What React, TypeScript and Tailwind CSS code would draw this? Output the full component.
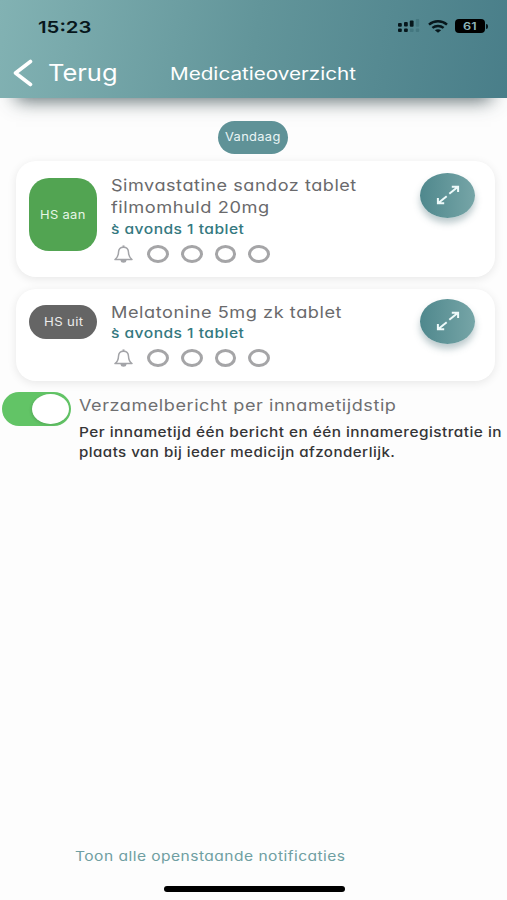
import { useLayoutEffect, useRef, useState } from "react";

/** A single line of text that is widened to fill the width of its box. */
function Line({ children, className = "" }: { children: string; className?: string }) {
  const box = useRef<HTMLDivElement>(null);
  const text = useRef<HTMLSpanElement>(null);
  const [scale, setScale] = useState(1);
  useLayoutEffect(() => {
    if (box.current && text.current) {
      setScale(box.current.clientWidth / text.current.offsetWidth);
    }
  }, [children]);
  return (
    <div ref={box} className={`shrink-0 whitespace-nowrap ${className}`}>
      <span ref={text} className="inline-block origin-left" style={{ transform: `scaleX(${scale})` }}>
        {children}
      </span>
    </div>
  );
}

function StatusIcons() {
  return (
    <div className="flex items-center">
      <svg width="22" height="14" viewBox="0 0 22 14">
        <g fill="#07171c">
          <rect x="0" y="4" width="3.8" height="3.8" rx="1" />
          <rect x="0" y="9.6" width="3.8" height="3.4" rx="1" />
          <rect x="6" y="3" width="3.8" height="4.6" rx="1" />
          <rect x="6" y="9.6" width="3.8" height="3.4" rx="1" />
          <rect x="11.8" y="1.4" width="3.8" height="6.4" rx="1" />
        </g>
        <g fill="#3d6f78" opacity=".65">
          <rect x="17.8" y="0" width="3.4" height="7.8" rx="1" />
          <rect x="11.8" y="9.6" width="3.8" height="3.4" rx="1" />
          <rect x="17.8" y="9.6" width="3.4" height="3.4" rx="1" />
        </g>
      </svg>
      <svg className="ml-2" width="20" height="13" viewBox="0 0 20 13" fill="none" stroke="#07171c" strokeWidth="2.5">
        <path d="M1 4.6C6 .2 14 .2 19 4.6" />
        <path d="M4.4 7.9c3.2-2.7 8-2.7 11.2 0" />
        <path d="M10 12.8 6.9 10.2c1.8-1.4 4.4-1.4 6.2 0Z" fill="#07171c" stroke="none" />
      </svg>
      <div className="ml-[7px] flex h-[13.5px] w-[30px] items-center justify-center rounded-[4px] bg-black">
        <Line className="w-[14px] text-[10px] leading-[13px] font-semibold text-[#8db4b9]">61</Line>
      </div>
      <div className="ml-px h-[5px] w-[2px] rounded-r-full bg-[#07171c]" />
    </div>
  );
}

function Bell() {
  return (
    <svg width="19" height="18" viewBox="0 0 19 18" fill="none" stroke="#a3a4a8" strokeWidth="1.5" strokeLinejoin="round">
      <path d="M9.5 2.2C6 2.2 4.6 4.5 4.5 7.2 4.4 11 3.6 12.6 1 14.6h17c-2.6-2-3.4-3.6-3.5-7.4-.1-2.7-1.5-5-5-5Z" />
      <path d="M9.5 2.2V.4" strokeWidth="2" />
      <path d="M7.2 15.4c.3 2.2 4.3 2.2 4.6 0Z" fill="#a3a4a8" />
    </svg>
  );
}

function Intakes() {
  return (
    <div className="mt-[6px] ml-[3px] flex items-center">
      <Bell />
      <div className="ml-[14px] flex gap-[12px]">
        {[0, 1, 2, 3].map((i) => (
          <div key={i} className="h-[18px] w-[21.8px] rounded-[50%] border-[3px] border-[#a5a5a7]" />
        ))}
      </div>
    </div>
  );
}

function ExpandButton() {
  return (
    <button className="-mt-px flex h-[45px] w-[55px] shrink-0 items-center justify-center rounded-[50%] bg-linear-to-r from-[#4f888d] to-[#76a5a7] shadow-[0_5px_7px_rgba(60,100,110,0.35)]">
      <svg width="24" height="20" viewBox="0 0 24 20" fill="none" stroke="#eefafa" strokeWidth="2">
        <path d="M13.3 8.8 22 1.8M15.8 1.7h6.3v5.2M10.7 11.2 2 18.2M8.2 18.3H1.9v-5.2" />
      </svg>
    </button>
  );
}

const name = "h-[22.5px] text-[16.5px] leading-[22.5px] tracking-[0.5px] text-[#6a6a6c]";
const dose = "h-5 w-[133px] text-[13.5px] leading-5 font-[450] tracking-[0.4px] text-[#35797f]";
const card = "ml-4 flex w-[479px] rounded-[20px] bg-white pl-[13px] pr-5 shadow-[0_2px_10px_rgba(0,0,0,0.09)]";

export default function App() {
  return (
    <div className="flex h-[900px] w-full flex-col overflow-hidden bg-[#fdfdfd] font-['Inter',sans-serif] [font-feature-settings:'cv11']">
      <header className="h-[98px] shrink-0 bg-linear-[100deg] from-[#82b2b3] via-[#62959a] to-[#497e89] shadow-[0_18px_18px_-16px_rgba(40,60,65,0.8)] [font-feature-settings:normal]">
        <div className="flex h-[52px] items-center justify-between pl-[37.5px] pr-[19px]">
          <Line className="w-[53px] pt-px text-[16.5px] leading-6 font-semibold text-[#07171c]">15:23</Line>
          <StatusIcons />
        </div>
        <div className="flex h-[42px] items-center pl-[13px]">
          <svg width="20" height="28" viewBox="0 0 20 28" fill="none" stroke="white" strokeWidth="3.6" strokeLinecap="round" strokeLinejoin="round">
            <path d="M17.5 2.5 2.5 14l15 11.5" />
          </svg>
          <Line className="ml-[15px] w-[69px] text-[22.5px] leading-7 text-white">Terug</Line>
          <Line className="ml-[53px] w-[186px] pt-[2px] text-[17px] leading-7 text-white">Medicatieoverzicht</Line>
        </div>
      </header>

      <main className="flex grow flex-col">
        <div className="ml-[218px] mt-[22.5px] flex h-[33px] w-[70px] shrink-0 items-center justify-center rounded-full bg-[#5f9297] [font-feature-settings:normal]">
          <Line className="w-[56px] text-[11.5px] leading-4 tracking-[0.3px] text-[#e9f5f5]">Vandaag</Line>
        </div>

        <section className={`${card} mt-[7px] h-[116.5px] pt-[13px]`}>
          <div className="mt-[4.5px] flex h-[73px] w-[68px] shrink-0 items-center justify-center rounded-[20px] bg-[#52a452] [font-feature-settings:normal]">
            <Line className="w-[46px] text-[11.5px] leading-4 tracking-[0.3px] text-[#e6f6e6]">HS aan</Line>
          </div>
          <div className="ml-[14px] grow">
            <Line className={`${name} w-[246px]`}>Simvastatine sandoz tablet</Line>
            <Line className={`${name} w-[159px]`}>filmomhuld 20mg</Line>
            <Line className={dose}>{"s\u0300 avonds 1 tablet"}</Line>
            <Intakes />
          </div>
          <ExpandButton />
        </section>

        <section className={`${card} mt-3 h-[91.5px] pt-[10.5px]`}>
          <div className="mt-[5px] flex h-[34.5px] w-[68px] shrink-0 items-center justify-center rounded-[18px] bg-[#656565] [font-feature-settings:normal]">
            <Line className="w-[39px] text-[11.5px] leading-4 tracking-[0.3px] text-[#ececec]">HS uit</Line>
          </div>
          <div className="ml-[14px] grow pt-px">
            <Line className={`${name} w-[231px]`}>Melatonine 5mg zk tablet</Line>
            <Line className={`${dose} -mt-[0.5px]`}>{"s\u0300 avonds 1 tablet"}</Line>
            <Intakes />
          </div>
          <ExpandButton />
        </section>

        <section className="mt-[11px] flex">
          <div className="ml-[2px] flex h-[34.5px] w-[69px] shrink-0 items-center justify-end rounded-full bg-[#62c466] pr-[2px]">
            <div className="h-[30.5px] w-[37px] rounded-[50%] bg-white shadow-[-1px_1px_3px_rgba(0,0,0,0.12)]" />
          </div>
          <div className="ml-[8px] pt-[2px]">
            <Line className="w-[318px] text-[16px] leading-[22px] tracking-[0.5px] text-[#6f6f71]">Verzamelbericht per innametijdstip</Line>
            <Line className="mt-[7.5px] w-[423px] text-[13.5px] leading-[19.7px] font-[450] tracking-[0.4px] text-[#353537]">Per innametijd één bericht en één innameregistratie in</Line>
            <Line className="w-[316px] text-[13.5px] leading-[19.7px] font-[450] tracking-[0.4px] text-[#353537]">plaats van bij ieder medicijn afzonderlijk.</Line>
          </div>
        </section>

        <footer className="mt-auto flex h-[54px] flex-col">
          <Line className="ml-[74.5px] w-[270px] text-[13.5px] leading-5 tracking-[0.4px] text-[#6f9fa2]">Toon alle openstaande notificaties</Line>
          <div className="mt-[19.5px] ml-[164px] h-[6px] w-[180.5px] rounded-full bg-black" />
        </footer>
      </main>
    </div>
  );
}
